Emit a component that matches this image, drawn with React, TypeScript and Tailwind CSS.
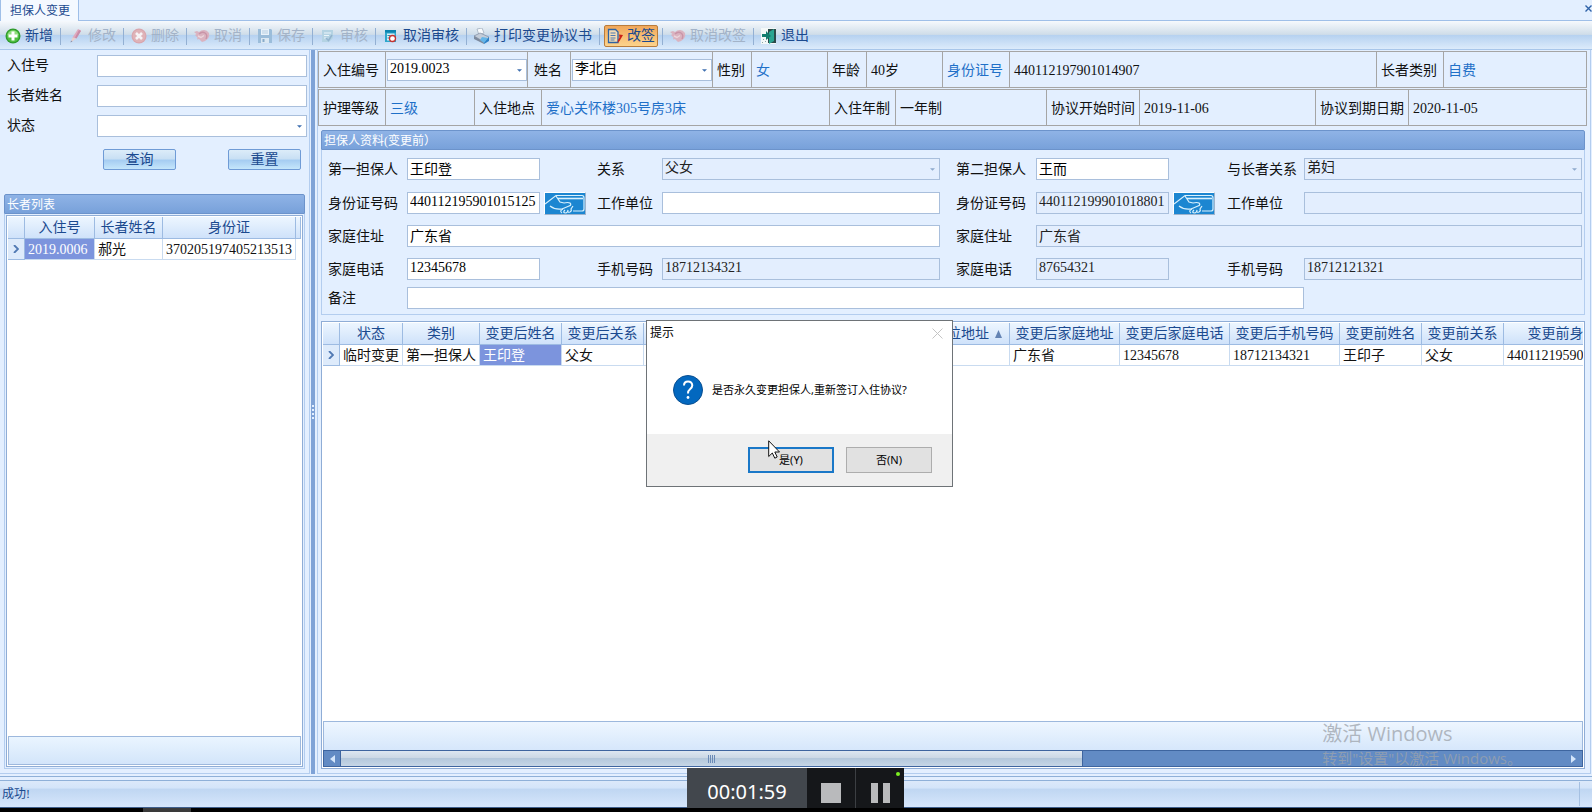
import React, { ReactNode } from 'react';

const ARROW = 'pointer-events-none absolute right-[5px] top-1/2 -mt-px h-[3px] w-[5px]';

const Arrow: React.FC<{ muted?: boolean }> = ({ muted }) => (
  <svg viewBox="0 0 6 3" className={ARROW}>
    <path d="M0 0H6L3 3Z" fill={muted ? '#8ea9cc' : '#3f6fb0'} />
  </svg>
);

interface FieldProps {
  id: string;
  label: string;
  value?: string;
  muted?: boolean;
  className?: string;
}

const TextField: React.FC<FieldProps> = ({ id, label, value = '', muted, className = '' }) => (
  <input
    id={id}
    type="text"
    aria-label={label}
    defaultValue={value}
    readOnly={muted}
    className={`h-[22px] w-full min-w-0 border border-[#a9bfdc] pl-0.5 pb-0.5 leading-[18px] outline-none ${
      muted ? 'bg-[#e3eefe] text-[#222]' : 'bg-white text-black'
    } ${className}`}
  />
);

const SelectField: React.FC<FieldProps> = ({ id, label, value = '', muted, className = '' }) => (
  <div className={`relative h-[22px] w-full ${className}`}>
    <select
      id={id}
      aria-label={label}
      defaultValue={value}
      className={`block h-[22px] w-full appearance-none border border-[#a9bfdc] pl-0.5 pb-0.5 leading-[18px] outline-none ${
        muted ? 'bg-[#e3eefe] text-[#222]' : 'bg-white text-black'
      }`}
    >
      <option value={value}>{value}</option>
    </select>
    <Arrow muted={muted} />
  </div>
);

/* ---------- toolbar icons ---------- */

const AddIcon = () => (
  <svg viewBox="0 0 16 16" className="h-4 w-4">
    <circle cx="8" cy="8" r="7.5" fill="#2f9a2c" />
    <circle cx="8" cy="8" r="6.2" fill="#4fbf3f" />
    <path d="M2.5 7A5.6 5.6 0 0 1 13.500 7Q8 9 2.500 7Z" fill="#8fdc7c" />
    <path d="M6.500 3.500h3v3h3v3h-3v3h-3v-3h-3v-3h3z" fill="#fff" />
  </svg>
);

const PencilIcon = () => (
  <svg viewBox="0 0 16 16" className="h-4 w-4">
    <path d="M10 1l3 1.500-5 8-3.500-1z" fill="#dfa9bd" />
    <path d="M11 2l2 1-4.500 7.500-1.500-1z" fill="#c98ba6" />
    <path d="M4.500 9.500L8 10.500l-4 3-1 .5z" fill="#e9cfc9" />
    <path d="M3 12.500l-.5 2 2-1z" fill="#8b8fa8" />
  </svg>
);

const DeleteIcon = () => (
  <svg viewBox="0 0 16 16" className="h-4 w-4">
    <circle cx="8" cy="8" r="7.500" fill="#d9a6ae" />
    <circle cx="8" cy="8" r="6.300" fill="#dfb3b8" />
    <path d="M5 5l6 6M11 5l-6 6" stroke="#f6f3f6" strokeWidth="2.600" />
  </svg>
);

const UndoIcon = () => (
  <svg viewBox="0 0 16 16" className="h-4 w-4">
    <path d="M0 4l3-1 2 1q2-2 5-2t5 3q1 3-1 5.500T8 14l-3-3-2 .5.500-2L1 7l1.500-1z" fill="#dab3c0" />
    <path d="M5 6q3-3 6-1t1 6" stroke="#c994a7" strokeWidth="1.400" fill="none" />
    <path d="M4 8l3 1.500 3-2" stroke="#ecd5db" strokeWidth="1.400" fill="none" />
  </svg>
);

const SaveIcon = () => (
  <svg viewBox="0 0 16 16" className="h-4 w-4">
    <path d="M1 1h13l1 1v13H1z" fill="#9bbdda" />
    <path d="M4 1h8v6H4z" fill="#e9f2fa" />
    <path d="M5 3h6M5 5h6" stroke="#b7cfe2" />
    <path d="M4 10h8v5H4z" fill="#dbe8f3" />
    <path d="M5.500 11h2v3h-2z" fill="#87abc9" />
  </svg>
);

const AuditIcon = () => (
  <svg viewBox="0 0 16 16" className="h-4 w-4">
    <path d="M2 2h11v8l-4 4H2z" fill="#b4d3e3" />
    <path d="M4 5h7M4 7.500h5M4 10h3" stroke="#eaf4fa" />
    <path d="M6 10l2.500 2.500L12 7" stroke="#93b4cf" strokeWidth="1.600" fill="none" />
  </svg>
);

const AuditCancelIcon = () => (
  <svg viewBox="0 0 16 16" className="h-4 w-4">
    <path d="M2 2h11v12H2z" fill="#2ca6cb" />
    <path d="M2 2h11v2.500H2z" fill="#0d84b0" />
    <path d="M4 5.500h7.500v7H4z" fill="#d8f0f8" />
    <path d="M4.500 7.500h3M4.500 10h1.500" stroke="#2a8fb3" />
    <circle cx="9.500" cy="10.500" r="3" fill="#fff" stroke="#c8322e" strokeWidth="1.300" />
  </svg>
);

const PrintIcon = () => (
  <svg viewBox="0 0 16 16" className="h-4 w-4">
    <path d="M3 1l5-1 2 5-5 2z" fill="#f8fafc" stroke="#9aa7b8" strokeWidth=".7" />
    <path d="M0 8l6-3 9 4-5 5z" fill="#c3ccd8" stroke="#7f8da0" strokeWidth=".7" />
    <path d="M0 8l10 6v2L0 11z" fill="#7d8a9d" />
    <path d="M10 14l5-5v4l-5 3z" fill="#2d80c6" />
    <path d="M8 9l6 1-4 5-4-3z" fill="#64b5e8" />
  </svg>
);

const ResignIcon = () => (
  <svg viewBox="0 0 16 16" className="h-4 w-4">
    <path d="M1.500 1.500h7l2.500 2.500V14.500h-9.500z" fill="#f4dcb5" stroke="#2e63a4" strokeWidth="1.300" />
    <path d="M3.500 5h5M3.500 7.500h5M3.500 10h5M3.500 12h4" stroke="#4d7bb3" />
    <path d="M12 6.500l4 .5-2 3.500-1.500 2.500-2 2 .5-3 1.500-2.500z" fill="#cc2218" />
  </svg>
);

const ExitIcon = () => (
  <svg viewBox="0 0 16 16" className="h-4 w-4">
    <path d="M0 0h15v16H0z" fill="#f4f8f8" />
    <path d="M7 1h8v14H7z" fill="#2b4a4a" />
    <path d="M8 4l5-3v12l-5 3z" fill="#2aa592" />
    <path d="M1 6h4V3l5 5-5 4V9H1z" fill="#127d6f" />
    <path d="M2 11h1v1H2zM4 13h1v1H4zM1 14h1v1H1z" fill="#8ba6a6" />
  </svg>
);

interface Tool {
  text: string;
  icon: ReactNode;
  disabled?: boolean;
  active?: boolean;
}

const TOOLS: Tool[] = [
  { text: '新增', icon: <AddIcon /> },
  { text: '修改', icon: <PencilIcon />, disabled: true },
  { text: '删除', icon: <DeleteIcon />, disabled: true },
  { text: '取消', icon: <UndoIcon />, disabled: true },
  { text: '保存', icon: <SaveIcon />, disabled: true },
  { text: '审核', icon: <AuditIcon />, disabled: true },
  { text: '取消审核', icon: <AuditCancelIcon /> },
  { text: '打印变更协议书', icon: <PrintIcon /> },
  { text: '改签', icon: <ResignIcon />, active: true },
  { text: '取消改签', icon: <UndoIcon />, disabled: true },
  { text: '退出', icon: <ExitIcon /> },
];

const Toolbar = () => (
  <div
    role="toolbar"
    className="flex h-[29px] flex-none items-center overflow-hidden border-b border-[#a8c6ea] bg-[linear-gradient(to_bottom,#f6f9fd_0%,#cfdde9_48%,#b5d1f0_50%,#dcebfb_100%)] pt-0.5"
  >
    {TOOLS.map((t, i) => (
      <div key={t.text} className="flex items-center">
        {i > 0 && <span className="h-[17px] w-px bg-[#93b0d3]" />}
        <button
          type="button"
          disabled={t.disabled}
          className={`flex h-[22px] items-center gap-1 whitespace-nowrap border leading-5 ${
            t.active
              ? 'mx-1 rounded-xs border-[#b97c3c] bg-linear-to-b from-[#f0a75a] to-[#fcd38c] px-0.5'
              : i === 0
                ? 'border-transparent pl-1 pr-1.5'
                : 'border-transparent px-1.5'
          } ${t.disabled ? 'text-[#a3b3c8]' : 'text-[#1b4a8f]'}`}
        >
          {t.icon}
          {t.text}
        </button>
      </div>
    ))}
  </div>
);

/* ---------- left side ---------- */

const PanelTitle: React.FC<{ children: ReactNode }> = ({ children }) => (
  <h2 className="h-5 flex-none rounded-t-xs border border-[#6c93cb] bg-linear-to-b from-[#8fb3e6] to-[#78a1da] pl-0.5 text-xs leading-[21px] text-white">
    {children}
  </h2>
);

const TH = 'h-[22px] overflow-hidden whitespace-nowrap border-r border-b border-[#9dbbe2] bg-linear-to-b from-[#edf6ff] to-[#cfe2fa] p-0 text-center font-normal text-[#1b4a8f] leading-[21px]';
const TD = 'h-[21px] overflow-hidden whitespace-nowrap border-r border-b border-[#c9dbf0] p-0 pl-[3px] leading-[19px]';
const TD_SELECTED = 'bg-[#7c94dd] text-white';

const RowMarker = () => (
  <td className="h-[21px] border-r border-b border-[#9dbbe2] bg-[#deebfb] p-0">
    <svg viewBox="0 0 6 8" className="mx-auto h-2 w-1.5">
      <path d="M1 0l4 4-4 4" fill="none" stroke="#5079b3" strokeWidth="1.800" />
    </svg>
  </td>
);

const ActionButton: React.FC<{ children: ReactNode }> = ({ children }) => (
  <button
    type="button"
    className="h-[21px] w-[73px] rounded-xs border border-[#6f9bd6] bg-[linear-gradient(to_bottom,#dcecf9_0%,#c9e0f4_45%,#a6cdf2_55%,#c5e6fb_100%)] leading-[18px] text-[#1b4a8f]"
  >
    {children}
  </button>
);

const SearchPanel = () => (
  <aside className="flex w-[310px] flex-none flex-col border-r border-b border-[#b3cdef] pb-1">
    <form className="flex flex-col gap-2 pl-[7px] pr-[2px] pt-[5px]">
      <div className="grid grid-cols-[90px_1fr] items-center">
        <label htmlFor="q-no" className="leading-[22px]">入住号</label>
        <TextField id="q-no" label="入住号" />
      </div>
      <div className="grid grid-cols-[90px_1fr] items-center">
        <label htmlFor="q-name" className="leading-[22px]">长者姓名</label>
        <TextField id="q-name" label="长者姓名" />
      </div>
      <div className="grid grid-cols-[90px_1fr] items-center">
        <label htmlFor="q-status" className="leading-[22px]">状态</label>
        <SelectField id="q-status" label="状态" />
      </div>
      <div className="mt-1 flex justify-between pl-24 pr-1.5">
        <ActionButton>查询</ActionButton>
        <ActionButton>重置</ActionButton>
      </div>
    </form>

    <section className="ml-1 mr-1 mt-6 flex min-h-0 flex-1 flex-col">
      <PanelTitle>长者列表</PanelTitle>
      <div className="flex min-h-0 flex-1 border border-t-0 border-[#b3cdef] p-px">
        <div className="flex flex-1 flex-col border border-[#8fadd6] bg-white p-px">
          <table className="w-full table-fixed border-separate border-spacing-0">
            <colgroup>
              <col className="w-[17px]" />
              <col className="w-[70px]" />
              <col className="w-[68px]" />
              <col />
              <col className="w-[5px]" />
            </colgroup>
            <thead>
              <tr>
                <th className={TH} />
                <th className={TH}>入住号</th>
                <th className={TH}>长者姓名</th>
                <th className={TH}>身份证</th>
                <th className={TH} />
              </tr>
            </thead>
            <tbody>
              <tr>
                <RowMarker />
                <td className={`${TD} ${TD_SELECTED}`}>2019.0006</td>
                <td className={TD}>郝光</td>
                <td className={TD}>370205197405213513</td>
                <td />
              </tr>
            </tbody>
          </table>
          <div className="mt-auto h-[29px] border border-[#9db8dd] bg-linear-to-b from-[#eaf5ff] to-[#d3e5fa]" />
        </div>
      </div>
    </section>
  </aside>
);

/* ---------- right side ---------- */

const Cell: React.FC<{ children: ReactNode; blue?: boolean; tight?: boolean }> = ({ children, blue, tight }) => (
  <div
    className={`flex min-w-0 items-center whitespace-nowrap border-r border-[#a5a5a5] last:border-r-0 ${
      tight ? 'pl-px' : 'pl-1 pt-0.5'
    } ${blue ? 'text-[#1f70c8]' : 'text-[#111]'}`}
  >
    {children}
  </div>
);

const ElderInfo = () => (
  <div className="flex flex-col gap-px">
    <div className="grid h-[37px] grid-cols-[67px_142px_43px_142px_39px_76px_39px_76px_67px_1fr_67px_142px] border border-[#a5a5a5]">
      <Cell>入住编号</Cell>
      <Cell tight>
        <SelectField id="e-no" label="入住编号" value="2019.0023" />
      </Cell>
      <Cell>
        <span className="pl-0.5">姓名</span>
      </Cell>
      <Cell tight>
        <SelectField id="e-name" label="姓名" value="李北白" />
      </Cell>
      <Cell>性别</Cell>
      <Cell blue>女</Cell>
      <Cell>年龄</Cell>
      <Cell>40岁</Cell>
      <Cell blue>身份证号</Cell>
      <Cell>440112197901014907</Cell>
      <Cell>长者类别</Cell>
      <Cell blue>自费</Cell>
    </div>
    <div className="grid h-[37px] grid-cols-[67px_89px_67px_1fr_66px_151px_93px_176px_93px_177px] border border-[#a5a5a5]">
      <Cell>护理等级</Cell>
      <Cell blue>三级</Cell>
      <Cell>入住地点</Cell>
      <Cell blue>爱心关怀楼305号房3床</Cell>
      <Cell>入住年制</Cell>
      <Cell>一年制</Cell>
      <Cell>协议开始时间</Cell>
      <Cell>2019-11-06</Cell>
      <Cell>协议到期日期</Cell>
      <Cell>2020-11-05</Cell>
    </div>
  </div>
);

const CardButton: React.FC<{ label: string }> = ({ label }) => (
  <button type="button" aria-label={label} className="ml-1 h-[23px] w-[42px] border border-t-white border-l-white border-r-[#9db3cc] border-b-[#9db3cc]">
    <svg viewBox="0 0 40 21" className="block h-[21px] w-10" fill="none" stroke="#d9f1fd" strokeWidth="1.200">
      <rect width="40" height="21" fill="#1c86d1" stroke="none" />
      <path d="M0 11L11 2.500H37Q39 2.500 39 5V16Q39 18 37 18H28" />
      <path d="M13 5.500H38" strokeWidth="1.600" />
      <path d="M11 3L15 9L19 10Q23 9 25 10Q27 12 24 13L17 16Q10 17 5 13" />
      <path d="M18 16Q14 18 17 20M20 17Q17 20 21 20Q23 19 23 17Q22 20 25 19Q27 18 26 16L28 13" />
    </svg>
  </button>
);

const FormLabel: React.FC<{ htmlFor: string; indent?: boolean; children: ReactNode }> = ({ htmlFor, indent, children }) => (
  <label htmlFor={htmlFor} className={`whitespace-nowrap leading-6 ${indent ? 'pl-4' : ''}`}>
    {children}
  </label>
);

const GuarantorForm = () => (
  <section className="ml-[3px] mr-0.5 mt-1">
    <PanelTitle>担保人资料(变更前）</PanelTitle>
    <form className="grid grid-cols-[79px_133px_57px_65px_1fr_96px_133px_58px_77px_1fr] grid-rows-[34px_33px_33px_29px_27px] items-start border border-t-0 border-[#b3cdef] pl-1.5 pr-0.5 pt-2">
      <FormLabel htmlFor="g1-name">第一担保人</FormLabel>
      <TextField id="g1-name" label="第一担保人" value="王印登" />
      <span />
      <FormLabel htmlFor="g1-rel">关系</FormLabel>
      <SelectField id="g1-rel" label="关系" value="父女" muted />
      <FormLabel htmlFor="g2-name" indent>第二担保人</FormLabel>
      <TextField id="g2-name" label="第二担保人" value="王而" />
      <span />
      <FormLabel htmlFor="g2-rel">与长者关系</FormLabel>
      <SelectField id="g2-rel" label="与长者关系" value="弟妇" muted />

      <FormLabel htmlFor="g1-id">身份证号码</FormLabel>
      <TextField id="g1-id" label="身份证号码" value="440112195901015125" />
      <CardButton label="读取第一担保人身份证" />
      <FormLabel htmlFor="g1-work">工作单位</FormLabel>
      <TextField id="g1-work" label="工作单位" />
      <FormLabel htmlFor="g2-id" indent>身份证号码</FormLabel>
      <TextField id="g2-id" label="身份证号码" value="440112199901018801" muted />
      <CardButton label="读取第二担保人身份证" />
      <FormLabel htmlFor="g2-work">工作单位</FormLabel>
      <TextField id="g2-work" label="工作单位" muted />

      <FormLabel htmlFor="g1-addr">家庭住址</FormLabel>
      <TextField id="g1-addr" label="家庭住址" value="广东省" className="col-span-4" />
      <FormLabel htmlFor="g2-addr" indent>家庭住址</FormLabel>
      <TextField id="g2-addr" label="家庭住址" value="广东省" muted className="col-span-4" />

      <FormLabel htmlFor="g1-tel">家庭电话</FormLabel>
      <TextField id="g1-tel" label="家庭电话" value="12345678" />
      <span />
      <FormLabel htmlFor="g1-mobile">手机号码</FormLabel>
      <TextField id="g1-mobile" label="手机号码" value="18712134321" muted />
      <FormLabel htmlFor="g2-tel" indent>家庭电话</FormLabel>
      <TextField id="g2-tel" label="家庭电话" value="87654321" muted />
      <span />
      <FormLabel htmlFor="g2-mobile">手机号码</FormLabel>
      <TextField id="g2-mobile" label="手机号码" value="18712121321" muted />

      <FormLabel htmlFor="g-note">备注</FormLabel>
      <TextField id="g-note" label="备注" className="col-span-8" />
    </form>
  </section>
);

const COLUMNS = [
  { title: '状态', value: '临时变更', width: 63 },
  { title: '类别', value: '第一担保人', width: 77 },
  { title: '变更后姓名', value: '王印登', width: 82, selected: true },
  { title: '变更后关系', value: '父女', width: 82 },
  { title: '变更后身份证号', value: '440112195901015125', width: 240 },
  { title: '变更后单位地址', value: '', width: 126, sorted: true },
  { title: '变更后家庭地址', value: '广东省', width: 110 },
  { title: '变更后家庭电话', value: '12345678', width: 110 },
  { title: '变更后手机号码', value: '18712134321', width: 110 },
  { title: '变更前姓名', value: '王印子', width: 82 },
  { title: '变更前关系', value: '父女', width: 82 },
  { title: '变更前身份证号', value: '440112195901015125', width: 146 },
];

const ChangeGrid = () => (
  <section className="ml-[3px] mr-0.5 mt-1.5 flex min-h-0 flex-1 flex-col border border-[#8fadd6] bg-white p-px">
    <div className="min-h-0 flex-1 overflow-hidden">
      <table className="w-[1327px] table-fixed border-separate border-spacing-0">
        <colgroup>
          <col className="w-[17px]" />
          {COLUMNS.map((c) => (
            <col key={c.title} style={{ width: c.width }} />
          ))}
        </colgroup>
        <thead>
          <tr>
            <th className={TH} />
            {COLUMNS.map((c) => (
              <th key={c.title} className={TH}>
                {c.title}
                {c.sorted && (
                  <svg viewBox="0 0 7 8" className="ml-1.5 inline h-2 w-[7px] align-baseline">
                    <path d="M3.500 0L7 8H0Z" fill="#6484b4" />
                  </svg>
                )}
              </th>
            ))}
          </tr>
        </thead>
        <tbody>
          <tr>
            <RowMarker />
            {COLUMNS.map((c) => (
              <td key={c.title} className={`${TD} ${c.selected ? TD_SELECTED : ''}`}>
                {c.value}
              </td>
            ))}
          </tr>
        </tbody>
      </table>
    </div>
    <div className="h-[29px] flex-none border border-b-0 border-[#9db8dd] bg-linear-to-b from-[#eef6ff] to-[#d6e7fb]" />
    <div className="flex h-[17px] flex-none items-stretch border border-[#3e659f] bg-[#628bc4]">
      <button type="button" aria-label="向左滚动" className="flex w-[17px] items-center justify-center border-r border-[#3e659f]">
        <svg viewBox="0 0 5 8" className="h-2 w-[5px]">
          <path d="M5 0V8L0 4Z" fill="#d4e6fb" />
        </svg>
      </button>
      <div className="flex w-[59%] items-center justify-center border-r border-[#3e659f] bg-[linear-gradient(to_bottom,#dde7f1_0%,#cbd8e5_45%,#b4c8dc_50%,#c6d6e6_100%)]">
        <svg viewBox="0 0 8 8" className="h-2 w-2">
          <path d="M.5 0V8M2.500 0V8M4.500 0V8M6.500 0V8" stroke="#6a8ab6" />
        </svg>
      </div>
      <button type="button" aria-label="向右滚动" className="ml-auto flex w-[17px] items-center justify-center">
        <svg viewBox="0 0 5 8" className="h-2 w-[5px]">
          <path d="M0 0V8L5 4Z" fill="#d4e6fb" />
        </svg>
      </button>
    </div>
  </section>
);

/* ---------- floating windows ---------- */

const ConfirmDialog = () => (
  <div
    role="dialog"
    aria-labelledby="confirm-title"
    className="absolute left-[646px] top-80 flex h-[167px] w-[307px] flex-col border border-[#6e7377] bg-white font-['Noto_Sans','Noto_Sans_CJK_SC',sans-serif] text-black"
  >
    <div className="flex h-6 items-center justify-between pl-[3px] pr-[9px]">
      <h3 id="confirm-title" className="text-xs">提示</h3>
      <button type="button" aria-label="关闭">
        <svg viewBox="0 0 11 11" className="h-[11px] w-[11px]">
          <path d="M.5 .5l10 10M10.500 .5l-10 10" stroke="#c4c4c4" />
        </svg>
      </button>
    </div>
    <div className="flex flex-1 items-center gap-[9px] pl-[26px]">
      <svg viewBox="0 0 30 30" className="h-[30px] w-[30px] flex-none">
        <circle cx="15" cy="15" r="14.500" fill="#0368bf" stroke="#0a4f91" />
        <path d="M11 10.500Q11 6.500 15 6.500T19.300 10.300Q19.300 12.500 17 14.200T15 18.500" fill="none" stroke="#fff" strokeWidth="2" />
        <circle cx="15" cy="22.500" r="1.400" fill="#fff" />
      </svg>
      <p className="whitespace-nowrap text-[11px]">是否永久变更担保人,重新签订入住协议?</p>
    </div>
    <div className="flex h-[52px] items-center justify-end gap-3 bg-[#f0f0f0] pr-5 text-[11px]">
      <button type="button" className="h-[26px] w-[86px] border-2 border-[#1a78c8] bg-[#e1e1e1]">是(Y)</button>
      <button type="button" className="h-[26px] w-[86px] border border-[#adadad] bg-[#e1e1e1]">否(N)</button>
    </div>
    <svg viewBox="0 0 12 19" className="pointer-events-none absolute left-[121px] top-[119px] h-[19px] w-3">
      <path d="M.7 .8V16.500L4.300 13L6.800 18.200L9.200 17L6.800 12H11.500Z" fill="#fff" stroke="#111" />
    </svg>
  </div>
);

const Recorder = () => (
  <div className="absolute bottom-1 left-[687px] flex h-10 items-stretch bg-[#15171a]">
    <div className="flex w-[120px] items-center justify-center bg-[#42474d] pt-2 font-['Noto_Sans',sans-serif] text-xl text-white">
      00:01:59
    </div>
    <button type="button" aria-label="停止" className="flex w-12 items-center justify-center pt-2.5">
      <span className="h-5 w-5 bg-[#b9babc]" />
    </button>
    <button type="button" aria-label="暂停" className="flex w-[49px] items-center justify-center gap-[5px] border-l border-[#3c3f43] pt-2.5">
      <span className="h-5 w-[7px] bg-[#b9babc]" />
      <span className="h-5 w-[7px] bg-[#b9babc]" />
    </button>
    <span className="absolute right-1 top-1 h-1 w-1 rounded-full bg-[#7df021]" />
  </div>
);

const ActivationNotice = () => (
  <div className="pointer-events-none absolute bottom-[42px] right-[70px] whitespace-nowrap font-['Open_Sans','Noto_Sans_CJK_SC',sans-serif] text-[#9da3ab]/75">
    <p className="text-xl leading-6">激活 Windows</p>
    <p className="text-[15px] leading-6">转到"设置"以激活 Windows。</p>
  </div>
);

const App: React.FC = () => {
  return (
    <div className="relative flex h-screen flex-col overflow-hidden bg-[#e3efff] font-['Liberation_Serif','Noto_Sans_CJK_SC',sans-serif] text-sm leading-5 text-[#111]">
      <header className="flex h-[21px] flex-none items-end justify-between border-b border-[#9fbfe8]">
        <button type="button" className="-mb-px h-[21px] border-x border-[#9fbfe8] bg-[#f4f9ff] pl-[9px] pr-2 text-xs leading-5 text-[#1b4a8f]">
          担保人变更
        </button>
        <button type="button" aria-label="关闭页签" className="mb-2">
          <svg viewBox="0 0 7 7" className="h-[7px] w-[7px]">
            <path d="M.5 .5l6 6M6.500 .5l-6 6" stroke="#2f62a8" strokeWidth="1.400" />
          </svg>
        </button>
      </header>

      <Toolbar />

      <main className="flex min-h-0 flex-1">
        <SearchPanel />
        <div className="ml-px flex w-1 flex-none flex-col items-center justify-center gap-0.5 bg-[#7fa3d7]">
          <span className="h-0.5 w-0.5 bg-[#e3efff]" />
          <span className="h-0.5 w-0.5 bg-[#e3efff]" />
          <span className="h-0.5 w-0.5 bg-[#e3efff]" />
          <span className="h-0.5 w-0.5 bg-[#e3efff]" />
        </div>
        <div className="ml-0.5 mr-px flex min-w-0 flex-1 flex-col border-x border-b border-[#b3cdef] pb-1 pr-[3px] pt-px">
          <ElderInfo />
          <GuarantorForm />
          <ChangeGrid />
        </div>
      </main>

      <footer className="mt-[2px] flex-none border-t border-[#8fb0d8] pt-[3px]">
        <div className="flex h-7 items-center border-t border-b border-t-[#8fb0d8] border-b-[#3f5f8c] bg-[linear-gradient(to_bottom,#dce9fa_0%,#d3e4f9_28%,#bfd6f2_30%,#d6e6fb_100%)] pl-0.5 text-xs text-[#1b4a8f]">
          <span>成功!</span>
          <span className="ml-auto mr-3 h-6 w-px bg-[#a5c0e2]" />
        </div>
        <div className="h-1 bg-black pl-[143px]">
          <div className="h-1 w-12 bg-[#3a3a3a]" />
        </div>
      </footer>

      <ActivationNotice />
      <ConfirmDialog />
      <Recorder />
    </div>
  );
};

export default App;
